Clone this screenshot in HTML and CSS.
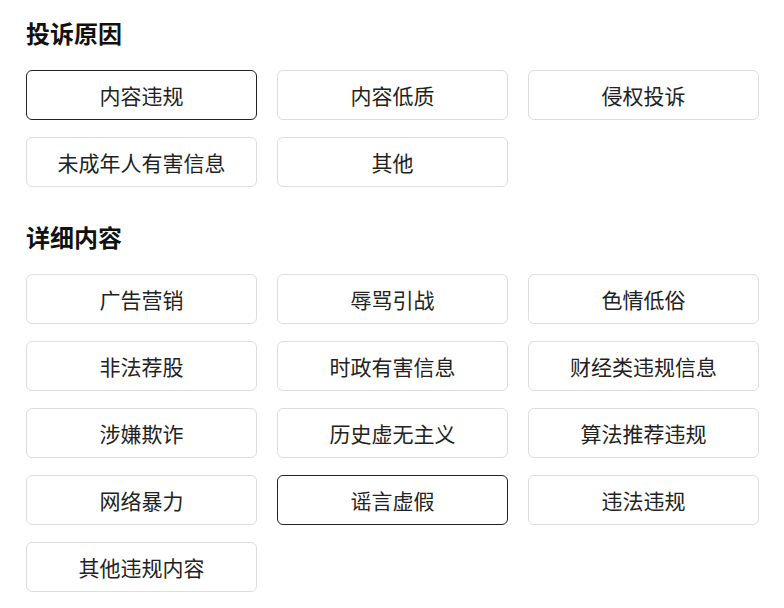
FILE: index.html
```html
<!DOCTYPE html>
<html lang="zh-CN">
<head>
    <meta charset="UTF-8">
    <meta name="viewport" content="width=device-width, initial-scale=1.0">
    <title>投诉</title>
    <link rel="stylesheet" href="styles.css">
</head>
<body>
    <main class="report">
        <section class="group">
            <h2>投诉原因</h2>
            <div class="options">
                <button class="option selected">内容违规</button>
                <button class="option">内容低质</button>
                <button class="option">侵权投诉</button>
                <button class="option">未成年人有害信息</button>
                <button class="option">其他</button>
            </div>
        </section>
        <section class="group">
            <h2>详细内容</h2>
            <div class="options">
                <button class="option">广告营销</button>
                <button class="option">辱骂引战</button>
                <button class="option">色情低俗</button>
                <button class="option">非法荐股</button>
                <button class="option">时政有害信息</button>
                <button class="option">财经类违规信息</button>
                <button class="option">涉嫌欺诈</button>
                <button class="option">历史虚无主义</button>
                <button class="option">算法推荐违规</button>
                <button class="option">网络暴力</button>
                <button class="option selected">谣言虚假</button>
                <button class="option">违法违规</button>
                <button class="option">其他违规内容</button>
            </div>
        </section>
    </main>
</body>
</html>
```

FILE: styles.css
```css
body {
    margin: 0;
    background-color: #fff;
    font-family: "Noto Sans CJK SC", "Noto Sans", sans-serif;
    color: #222;
}
.report {
    padding: 18px 25px 0 26px;
}
.group + .group {
    margin-top: 35px;
}
h2 {
    margin: 0 0 22px;
    font-size: 24px;
    line-height: 30px;
    font-weight: bold;
    color: #111;
}
.options {
    display: grid;
    grid-template-columns: repeat(3, 1fr);
    column-gap: 20px;
    row-gap: 17px;
}
.option {
    height: 50px;
    padding: 0;
    background-color: #fff;
    border: 1px solid #ddd;
    border-radius: 6px;
    font-family: inherit;
    font-size: 21px;
    color: #222;
    cursor: pointer;
}
.option.selected {
    border-color: #222;
}
```
